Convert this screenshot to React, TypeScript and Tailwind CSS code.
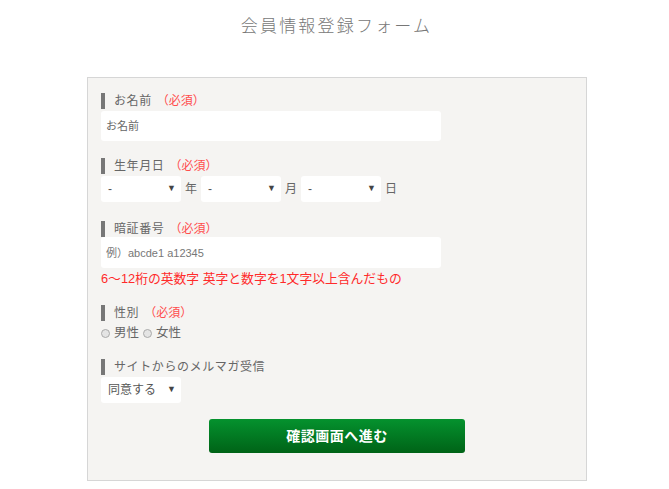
import React from 'react'

const jp = { fontFamily: '"Liberation Sans", "Noto Sans CJK JP", "Noto Sans", sans-serif' }

function Label({ text, required = false }: { text: string; required?: boolean }) {
  return (
    <div className="flex h-[16px] items-center">
      <span className="h-[16px] w-[4px] bg-[#777]" />
      <span className="ml-[9px] text-[12px] leading-[16px] tracking-[0.6px] text-[#666]">{text}</span>
      {required && (
        <span className="ml-[5px] text-[12px] leading-[16px] text-[#ff4d4d]">（必須）</span>
      )}
    </div>
  )
}

function SelectBox({ value }: { value: string }) {
  return (
    <div className="flex h-[26px] w-[80px] items-center justify-between rounded-[3px] bg-white pl-[7px] pr-[5px]">
      <span className="text-[12px] text-[#555]">{value}</span>
      <span className="text-[9px] text-[#444]">▼</span>
    </div>
  )
}

export default function App() {
  return (
    <div className="min-h-[489px] w-[669px] bg-white" style={jp}>
      <h1 className="pt-[16px] pl-[4px] text-center text-[17px] font-light leading-[22px] tracking-[2.2px] text-[#777]">
        会員情報登録フォーム
      </h1>

      <div className="ml-[87px] mt-[39px] w-[500px] border border-[#d6d6d6] bg-[#f5f4f2] px-[13px] pb-[27px] pt-[15px]">
        {/* お名前 */}
        <Label text="お名前" required />
        <input
          className="mt-[2px] h-[30px] w-[340px] rounded-[3px] bg-white px-[5px] text-[11px] text-[#555] outline-none placeholder:text-[#666]"
          placeholder="お名前"
        />

        {/* 生年月日 */}
        <div className="mt-[17px]">
          <Label text="生年月日" required />
        </div>
        <div className="mt-[2px] flex items-center">
          <SelectBox value="-" />
          <span className="ml-[4px] w-[16px] text-[12px] text-[#666]">年</span>
          <SelectBox value="-" />
          <span className="ml-[4px] w-[16px] text-[12px] text-[#666]">月</span>
          <SelectBox value="-" />
          <span className="ml-[4px] text-[12px] text-[#666]">日</span>
        </div>

        {/* 暗証番号 */}
        <div className="mt-[19px]">
          <Label text="暗証番号" required />
        </div>
        <input
          className="h-[31px] w-[340px] rounded-[3px] bg-white px-[5px] text-[11px] text-[#555] outline-none placeholder:text-[#777]"
          placeholder="例）abcde1 a12345"
        />
        <p className="mt-[4px] text-[12.8px] leading-[14px] text-[#ff2a2a]">
          6〜12桁の英数字 英字と数字を1文字以上含んだもの
        </p>

        {/* 性別 */}
        <div className="mt-[19px]">
          <Label text="性別" required />
        </div>
        <div className="mt-[2px] flex h-[20px] items-center text-[12.5px] text-[#666]">
          <span className="h-[9px] w-[9px] rounded-full border border-[#aaa] bg-[#e4e4e4]" />
          <span className="ml-[4px]">男性</span>
          <span className="ml-[4px] h-[9px] w-[9px] rounded-full border border-[#aaa] bg-[#e4e4e4]" />
          <span className="ml-[4px]">女性</span>
        </div>

        {/* メルマガ */}
        <div className="mt-[16px]">
          <Label text="サイトからのメルマガ受信" />
        </div>
        <div className="mt-[2px]">
          <SelectBox value="同意する" />
        </div>

        <div className="mt-[16px] flex justify-center">
          <button className="h-[34px] w-[256px] rounded-[3px] bg-gradient-to-b from-[#05922e] to-[#006317] text-[14px] font-bold tracking-[0.5px] text-white">
            確認画面へ進む
          </button>
        </div>
      </div>
    </div>
  )
}
